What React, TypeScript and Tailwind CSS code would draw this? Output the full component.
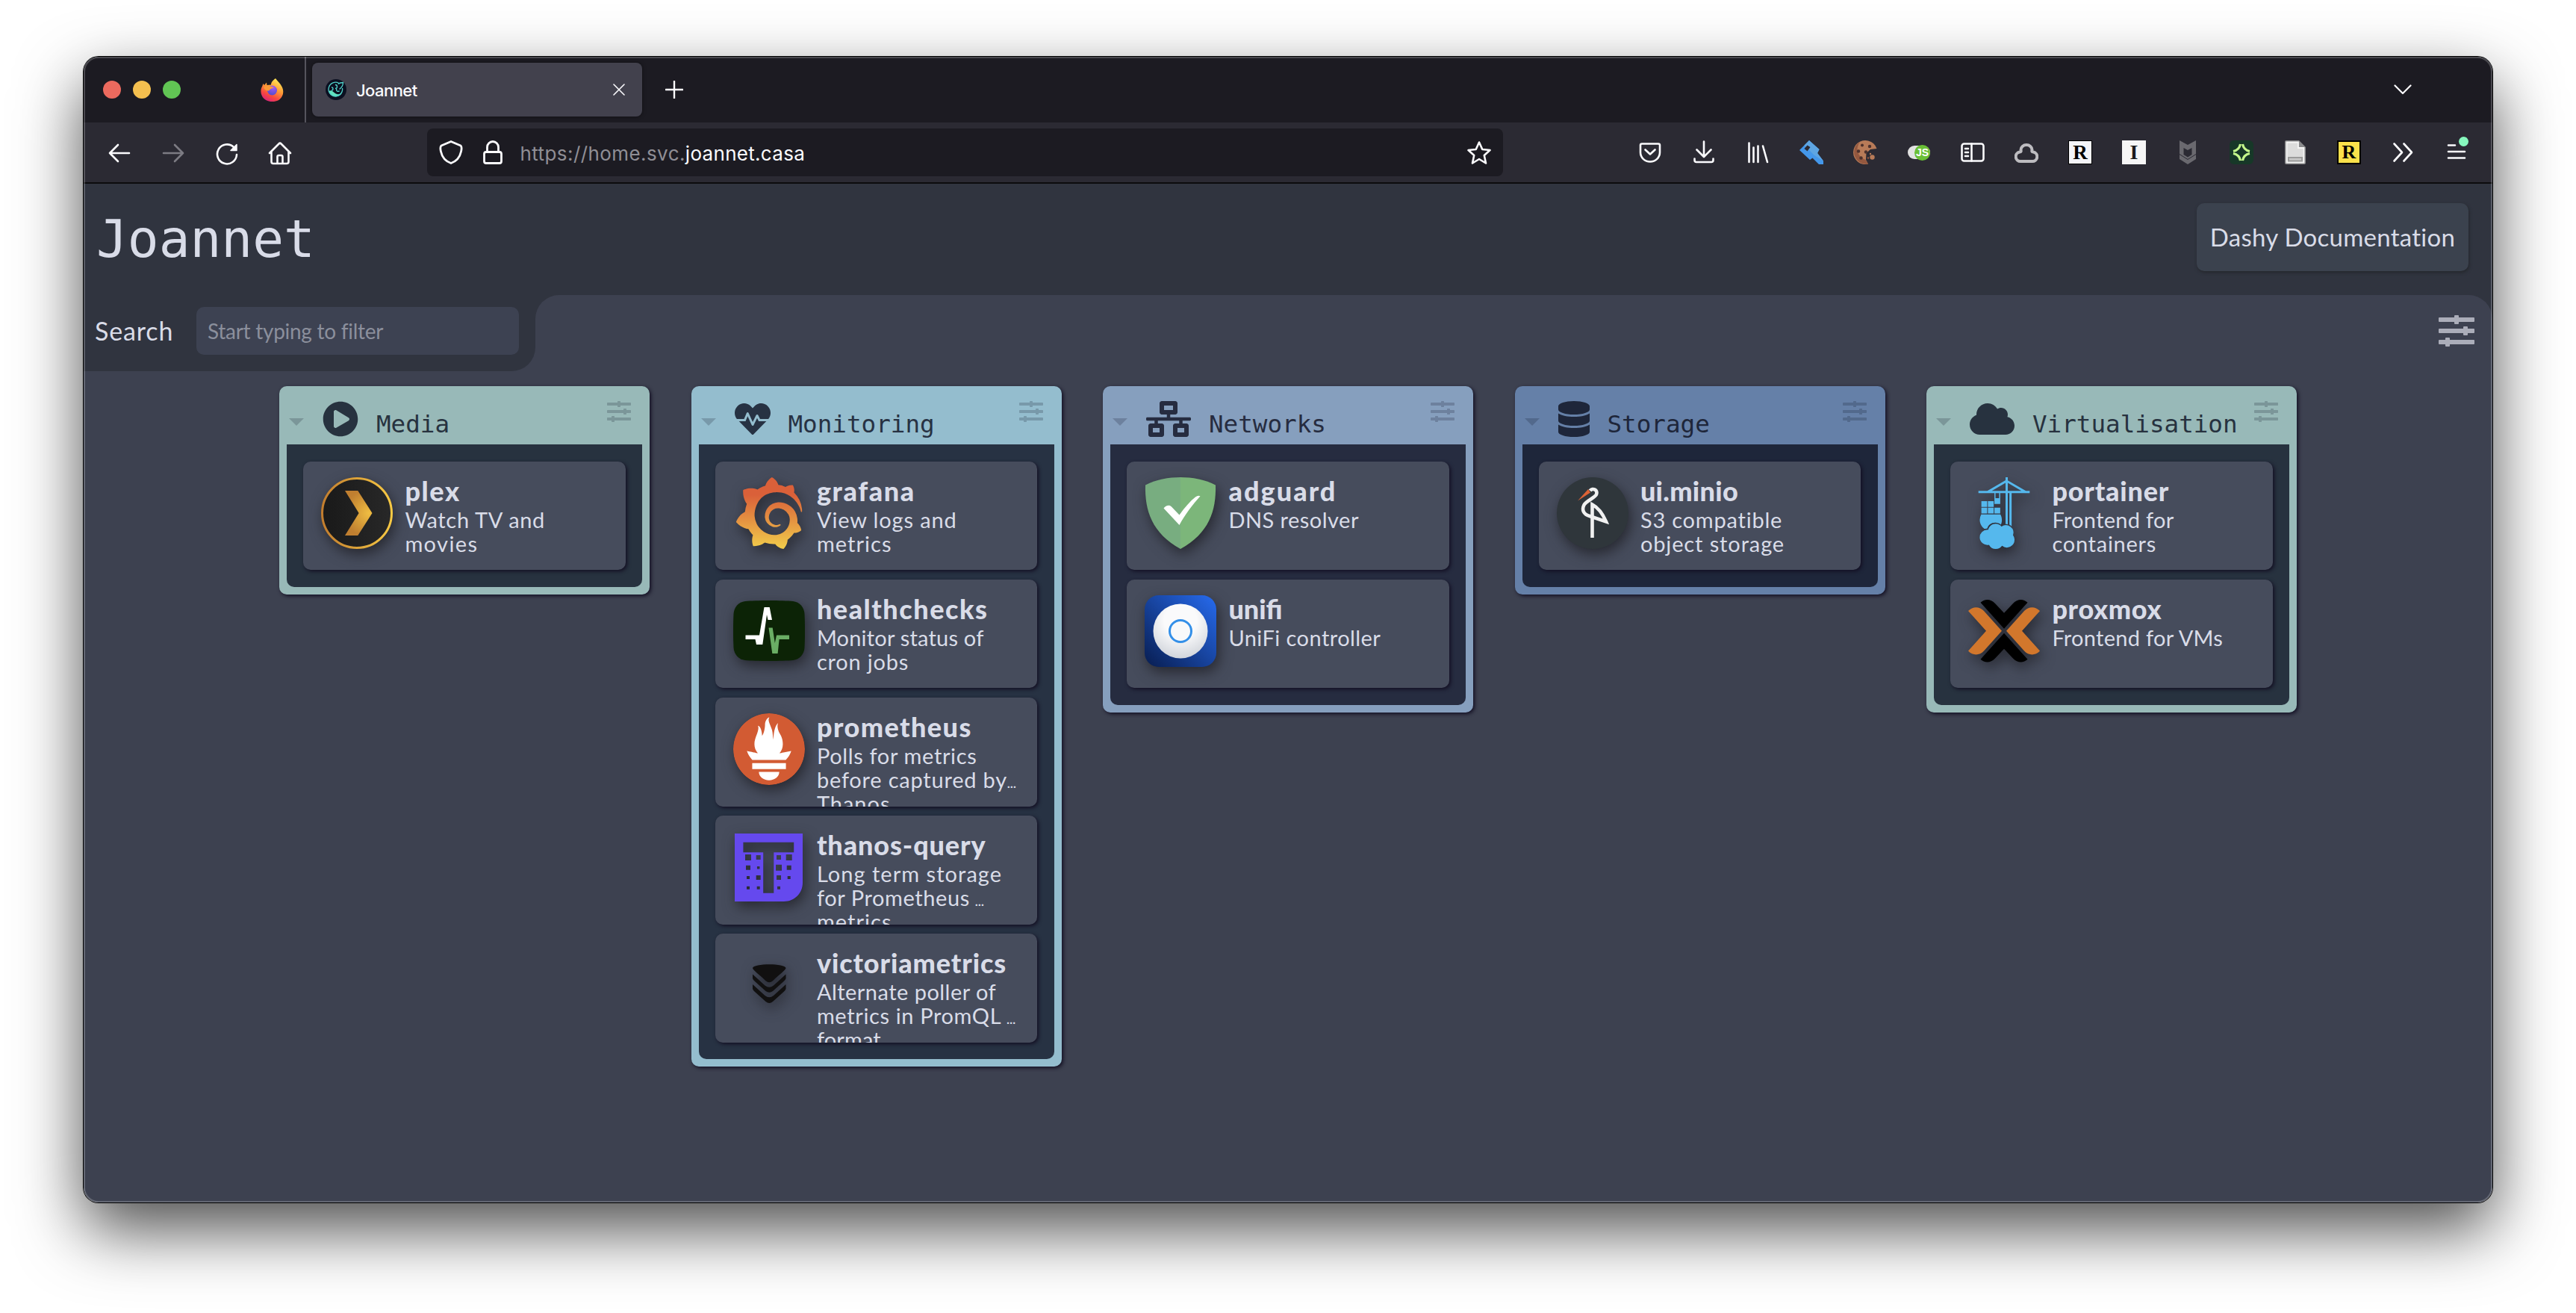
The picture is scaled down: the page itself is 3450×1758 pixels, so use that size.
import React from "react";
import { FaPlayCircle, FaHeartbeat, FaNetworkWired, FaDatabase, FaCloud } from "react-icons/fa";
import { SiGrafana, SiPrometheus, SiPortainer } from "react-icons/si";

/* ---------- service logos (96px box) ---------- */

const Plex = () => (
  <svg viewBox="0 0 96 96" className="size-24">
    <defs>
      <linearGradient id="plexRing" x1="0" x2="1"><stop offset="0" stopColor="#c27d2e" /><stop offset="1" stopColor="#f7c944" /></linearGradient>
      <linearGradient id="plexBg" x1="0" x2="1"><stop offset="0" stopColor="#191919" /><stop offset="1" stopColor="#282828" /></linearGradient>
      <radialGradient id="plexArrow" gradientUnits="userSpaceOnUse" cx="64" cy="48" r="32"><stop offset="0" stopColor="#efbd42" /><stop offset="1" stopColor="#c07f30" /></radialGradient>
    </defs>
    <circle cx="48" cy="48" r="46.5" fill="url(#plexBg)" stroke="url(#plexRing)" strokeWidth="3" />
    <path d="M32 18H49.300L68.500 48L49.300 78H32L50.600 48Z" fill="url(#plexArrow)" />
  </svg>
);

const Grafana = () => (
  <>
    <svg className="absolute size-0" aria-hidden="true">
      <defs><linearGradient id="grafanaFill" x1="0" x2="0" y1="0" y2="1"><stop offset="0.25" stopColor="#da6039" /><stop offset="1" stopColor="#f1cd4b" /></linearGradient></defs>
    </svg>
    <SiGrafana className="size-24" fill="url(#grafanaFill)" />
  </>
);

const Healthchecks = () => (
  <svg viewBox="0 0 96 81" className="w-24 h-[81px]">
    <path d="M16 1C30 -0.300 66 -0.300 80 1C89 2 95 9 95.500 18C96.200 33 96.200 48 95.500 63C95 72 89 79 80 80C66 81.300 30 81.300 16 80C7 79 1 72 0.500 63C-0.200 48 -0.200 33 0.500 18C1 9 7 2 16 1Z" fill="#0c2306" />
    <path d="M16.500 46.500H35L41.500 9H48.700L52 26H46.500L45 19L39.300 59H31L29.500 52H16.500Z" fill="#fff" />
    <path d="M47.500 36.500H52.700L55.800 57L58 46.500H75V52H61.600L59.600 71H52.300Z" fill="#6aad64" />
  </svg>
);

const Prometheus = () => (
  <SiPrometheus className="size-24 rounded-full bg-[radial-gradient(circle_closest-side,#fff_92%,transparent_93%)]" color="#d25b33" />
);

const thanosCells = [
  [18, 32, 8], [31.7, 32, 6], [59, 32, 6], [72.7, 32, 8],
  [18, 45.7, 6], [31.7, 45.7, 3.5], [59, 45.7, 8], [72.7, 45.7, 6],
  [18, 59, 4], [31.7, 59, 6], [59, 59, 6], [72.7, 59, 4],
  [18, 72.7, 4], [31.7, 72.7, 4], [59, 72.7, 4],
];
const thanosHoles = thanosCells.map(([x, y, s]) => `M${x - s / 2} ${y - s / 2}h${s}v${s}h${-s}z`).join("");
const Thanos = () => (
  <svg viewBox="0 0 91 91" className="size-[91px]">
    <path fillRule="evenodd" fill="#6549ee" d={`M0 0H91V66C91 80 80 91 66 91H0ZM11.400 11.700V25.300H38.200V79.700H52.300V25.300H79.200V11.700Z${thanosHoles}`} />
  </svg>
);

const Victoria = () => (
  <svg viewBox="0 0 96 96" className="size-24" fill="#111010">
    <path d="M26 25C27 18.500 69.500 18.500 70.500 25C70.500 28 61 34 53 42.300Q48.300 46 43.500 42.300C35.500 34 26 28 26 25Z" />
    <path d="M26 33.500L42.500 48.500Q48.300 53 54 48.500L70.500 33.500V39Q70 41 67.500 43L53 56Q48.300 59.500 43.500 56L29 43Q26.500 41 26 39Z" />
    <path d="M26 47L42.500 62Q48.300 66.500 54 62L70.500 47V53Q70 55 67.500 57L53 70Q48.300 74 43.500 70L29 57Q26.500 55 26 53Z" />
  </svg>
);

const Adguard = () => (
  <svg viewBox="0 0 96 96" className="size-24">
    <path d="M48 0C63 0 82 3 95 10.500C96 45 86 75 48 96Z" fill="#7cb67a" />
    <path d="M48 0C33 0 14 3 1 10.500C0 45 10 75 48 96Z" fill="#78ad80" />
    <path d="M25.500 41.500C28 38 33 36 36 39.500L46.500 50.500C54 40 61 32 68 26.500Q71.500 24 74.500 25.300C64 37 54 50 46.500 64Z" fill="#fff" />
  </svg>
);

const Unifi = () => (
  <svg viewBox="0 0 96 96" className="size-24">
    <defs>
      <linearGradient id="unifiBg" x1="0" y1="1" x2="1" y2="0"><stop offset="0" stopColor="#081d50" /><stop offset="1" stopColor="#276bee" /></linearGradient>
      <radialGradient id="unifiDisc" cx="0.5" cy="0.3" r="0.75"><stop offset="0.4" stopColor="#fafafb" /><stop offset="1" stopColor="#cdd1d8" /></radialGradient>
    </defs>
    <rect width="96" height="96" rx="19" fill="url(#unifiBg)" />
    <circle cx="48" cy="48" r="36.500" fill="url(#unifiDisc)" />
    <circle cx="48" cy="48" r="14.500" fill="#f8f9fa" stroke="#338fe8" strokeWidth="3" />
  </svg>
);

const Minio = () => (
  <svg viewBox="0 0 96 96" className="size-24">
    <circle cx="48" cy="48" r="48" fill="#2f363b" />
    <path d="M44.500 18C48 13.500 55.500 17 53 23C51 27.500 39 32 36.500 37C33 44 36 49.500 44 52L66 59.500C62 50 56 41 47.500 36.500V81" fill="none" stroke="#f1f1f1" strokeWidth="4.600" />
    <path d="M28 31.500L42 16L45 20.500Z" fill="#dd6336" />
  </svg>
);

const Portainer = () => <SiPortainer className="size-24" color="#55b8ed" />;

const Proxmox = () => (
  <svg viewBox="0 0 96 96" className="size-24">
    <g fill="#d2772c">
      <path d="M0 21C6 14.500 15 14.500 21 21L45 47.700L21 74.500C15 81 6 81 0 74.500L24 47.700Z" />
      <path d="M96 21C90 14.500 81 14.500 75 21L51 47.700L75 74.500C81 81 90 81 96 74.500L72 47.700Z" />
    </g>
    <path d="M16.500 9.700C22 4.500 30 4.500 36 11L48 23.700L60 11C66 4.500 74 4.500 79.500 9.700L48 44.700Z" />
    <path d="M16.500 85.700C22 90.900 30 90.900 36 84.400L48 71.700L60 84.400C66 90.900 74 90.900 79.500 85.700L48 50.700Z" />
  </svg>
);

/* ---------- dashboard data ---------- */

type Line = { text: string; track: string; more?: string };
type Item = { name: string; track: string; logo: () => React.ReactElement; lines: Line[] };
type Section = { title: string; icon: React.ReactElement; frame: string; ink: string; body: string; items: Item[] };

const teal = { frame: "bg-[#98b9b8]", ink: "text-[#27323f]", body: "bg-[#27323f]" };

const sections: Section[] = [
  {
    title: "Media", icon: <FaPlayCircle className="size-12" />, ...teal,
    items: [
      { name: "plex", track: "tracking-[1.63px]", logo: Plex, lines: [{ text: "Watch TV and", track: "tracking-[0.68px]" }, { text: "movies", track: "tracking-[1.38px]" }] },
    ],
  },
  {
    title: "Monitoring", icon: <FaHeartbeat className="size-12" />, frame: "bg-[#94bdce]", ink: "text-[#273243]", body: "bg-[#273243]",
    items: [
      { name: "grafana", track: "tracking-[1.59px]", logo: Grafana, lines: [{ text: "View logs and", track: "tracking-[0.87px]" }, { text: "metrics", track: "tracking-[1.03px]" }] },
      { name: "healthchecks", track: "tracking-[1.52px]", logo: Healthchecks, lines: [{ text: "Monitor status of", track: "tracking-[0.2px]" }, { text: "cron jobs", track: "tracking-[0.8px]" }] },
      { name: "prometheus", track: "tracking-[1.43px]", logo: Prometheus, lines: [{ text: "Polls for metrics", track: "tracking-[0.64px]" }, { text: "before captured by", track: "tracking-[0.79px]", more: "ml-0" }, { text: "Thanos", track: "tracking-[0.98px]" }] },
      { name: "thanos-query", track: "tracking-[0.89px]", logo: Thanos, lines: [{ text: "Long term storage", track: "tracking-[1.03px]" }, { text: "for Prometheus", track: "tracking-[0.59px]", more: "ml-[7px]" }, { text: "metrics", track: "tracking-[1.03px]" }] },
      { name: "victoriametrics", track: "tracking-[0.89px]", logo: Victoria, lines: [{ text: "Alternate poller of", track: "tracking-[0.47px]" }, { text: "metrics in PromQL", track: "tracking-[0.63px]", more: "ml-[7px]" }, { text: "format", track: "tracking-[0.13px]" }] },
    ],
  },
  {
    title: "Networks", icon: <FaNetworkWired className="h-12 w-[60px]" />, frame: "bg-[#869fbe]", ink: "text-[#262c40]", body: "bg-[#262c40]",
    items: [
      { name: "adguard", track: "tracking-[2.06px]", logo: Adguard, lines: [{ text: "DNS resolver", track: "tracking-[0.47px]" }] },
      { name: "unifi", track: "tracking-normal", logo: Unifi, lines: [{ text: "UniFi controller", track: "tracking-[0.44px]" }] },
    ],
  },
  {
    title: "Storage", icon: <FaDatabase className="h-12 w-[42px]" />, frame: "bg-[#6580a8]", ink: "text-[#1e263a]", body: "bg-[#1e263a]",
    items: [
      { name: "ui.minio", track: "tracking-[0.31px]", logo: Minio, lines: [{ text: "S3 compatible", track: "tracking-[0.78px]" }, { text: "object storage", track: "tracking-[0.88px]" }] },
    ],
  },
  {
    title: "Virtualisation", icon: <FaCloud className="h-12 w-[60px]" />, ...teal,
    items: [
      { name: "portainer", track: "tracking-[0.79px]", logo: Portainer, lines: [{ text: "Frontend for", track: "tracking-[0.3px]" }, { text: "containers", track: "tracking-[0.74px]" }] },
      { name: "proxmox", track: "tracking-[0.65px]", logo: Proxmox, lines: [{ text: "Frontend for VMs", track: "tracking-[0.29px]" }] },
    ],
  },
];

const Sliders = ({ className }: { className: string }) => (
  <svg viewBox="0 0 48 42" className={className} fill="currentColor">
    <rect y="3" width="48" height="6" rx="1" /><rect x="21" width="6" height="12" rx="1" />
    <rect y="18" width="48" height="6" rx="1" /><rect x="33" y="15" width="6" height="12" rx="1" />
    <rect y="33" width="48" height="6" rx="1" /><rect x="9" y="30" width="6" height="12" rx="1" />
  </svg>
);

function ItemCard({ item }: { item: Item }) {
  const Logo = item.logo;
  return (
    <a className="flex h-[145.6px] overflow-hidden rounded-[10px] bg-[#464c5c] pl-6 text-[#d9dce8] shadow-[2px_2px_5px_#130f23]">
      <div className="mt-[21px] flex size-24 shrink-0 items-center justify-center drop-shadow-[3px_7px_9px_rgba(28,28,34,0.75)]">
        <Logo />
      </div>
      <div className="ml-4 pt-[18px] font-['Lato',sans-serif] whitespace-nowrap">
        <div className={`text-[36px] leading-[42px] font-black ${item.track}`}>{item.name}</div>
        <div className="mt-[2px] text-[29px] leading-8">
          {item.lines.map((l) => (
            <div key={l.text} className="flex items-baseline">
              <span className={l.track}>{l.text}</span>
              {l.more && <span className={`text-[15px] leading-none font-black ${l.more}`}>…</span>}
            </div>
          ))}
        </div>
      </div>
    </a>
  );
}

function SectionCard({ section }: { section: Section }) {
  return (
    <section className={`w-[496px] shrink-0 rounded-[10px] px-2.5 pb-2.5 shadow-[2px_2px_5px_#130f23] ${section.frame}`}>
      <header className={`flex h-[78px] items-start ${section.ink}`}>
        <svg viewBox="0 0 20 10" className="mt-[43px] ml-[3px] h-2.5 w-5 opacity-25" fill="currentColor"><path d="M0 0H20L10 10Z" /></svg>
        <div className="mt-5 ml-[25px]">{section.icon}</div>
        <h2 className="mt-[30.500px] ml-[24px] font-['DejaVu_Sans_Mono',monospace] text-[32.6px] leading-10">{section.title}</h2>
        <Sliders className="mt-5 mr-[15px] ml-auto h-7 w-8 shrink-0 opacity-25" />
      </header>
      <div className={`flex flex-col gap-[12.6px] rounded-b-[10px] px-[22.4px] pt-[22.6px] pb-[22.4px] ${section.body}`}>
        {section.items.map((i) => <ItemCard key={i.name} item={i} />)}
      </div>
    </section>
  );
}

/* ---------- browser chrome ---------- */

const Stroke = ({ className, children, w = 2.6 }: { className: string; children: React.ReactNode; w?: number }) => (
  <svg viewBox="0 0 32 32" className={className} fill="none" stroke="currentColor" strokeWidth={w} strokeLinecap="round" strokeLinejoin="round">{children}</svg>
);

const Slot = ({ children }: { children: React.ReactNode }) => <div className="flex w-[72px] items-center justify-center">{children}</div>;

function TabStrip() {
  return (
    <div className="flex h-[88px] items-center bg-[#1c1b22]">
      <div className="flex gap-4 pl-[26px]">
        <span className="size-6 rounded-full bg-[#ec6a5e]" />
        <span className="size-6 rounded-full bg-[#f4bf4f]" />
        <span className="size-6 rounded-full bg-[#61c554]" />
      </div>
      <svg viewBox="0 0 31 31" className="ml-[107px] size-[31px]">
        <defs>
          <linearGradient id="foxBody" x1="0.8" y1="0" x2="0.3" y2="1"><stop offset="0" stopColor="#fff25a" /><stop offset="0.45" stopColor="#ff9a35" /><stop offset="0.75" stopColor="#f8483f" /><stop offset="1" stopColor="#d8227c" /></linearGradient>
          <radialGradient id="foxGlobe" cx="0.6" cy="0.2" r="0.9"><stop offset="0" stopColor="#a35af5" /><stop offset="1" stopColor="#4b4bc8" /></radialGradient>
        </defs>
        <path d="M20 0C23 4 26 6 28.500 11C32 18 30 24 25.500 28C20 32.500 10 32 5 27.500C-0.500 22.500 -0.500 15 2 11L3.500 7L5 9L8 5.500L8.500 9L14 8.500C14 5 17 2 20 0Z" fill="url(#foxBody)" />
        <circle cx="15.500" cy="16" r="6.500" fill="url(#foxGlobe)" />
        <path d="M4 12C8 8.500 14 10 18 12.500C15 13 13 14 11 16.500C8 17 5 15 4 12Z" fill="#fb9a37" />
      </svg>
      <span className="ml-[28px] h-full w-0.5 bg-[#55545d]" />
      <div className="ml-2 flex h-[72px] w-[442px] items-center rounded-lg bg-[#42414d] pr-[23px] pl-[18px] text-[#fbfbfe] shadow-[0_0_5px_rgba(0,0,0,0.5)]">
        <svg viewBox="0 0 28 28" className="size-7">
          <circle cx="14" cy="14" r="14" fill="#0b1021" />
          <path d="M4.500 16C8 14 10 17 13 19C17 21.500 20 20 22.500 17A9.300 9.300 0 0 1 4.500 16Z" fill="#62e3c0" />
          <path d="M18 5.500A9.300 9.300 0 1 0 22.500 12M17 6.500C19 4.500 21 4.500 23.500 4.500C23.500 8 22 11 18.500 13.500M13 7.500A2.500 2.500 0 1 1 13 12.500M8 11A2 2 0 1 1 8 15M15 13A2 2 0 1 0 18.500 15.500" fill="none" stroke="#4fd0c8" strokeWidth="1.300" />
        </svg>
        <span className="mt-[3px] ml-[13px] font-['Inter',sans-serif] text-[22px] font-medium tracking-[-0.55px]">Joannet</span>
        <Stroke className="ml-auto size-4" w={3.2}><path d="M2 2L30 30M30 2L2 30" /></Stroke>
      </div>
      <Stroke className="ml-[31px] size-6 text-[#fbfbfe]" w={3.2}><path d="M16 1V31M1 16H31" /></Stroke>
      <svg viewBox="0 0 24 14" className="mr-[108px] ml-auto h-3.500 w-6" fill="none" stroke="#fbfbfe" strokeWidth="2.200" strokeLinecap="round" strokeLinejoin="round"><path d="M1.500 1.500L12 12L22.500 1.500" /></svg>
    </div>
  );
}

function ToolBar() {
  return (
    <div className="flex h-[82px] items-center border-b-2 border-[#0c0c0d] bg-[#2b2a33] px-3 text-[#fbfbfe]">
      <Slot><Stroke className="mt-0.5 size-8"><path d="M29 16H3M14 5L3 16L14 27" /></Stroke></Slot>
      <Slot><Stroke className="mt-0.5 size-8 text-[#7c7b83]"><path d="M3 16H29M18 5L29 16L18 27" /></Stroke></Slot>
      <Slot>
        <Stroke className="mt-1 size-8"><path d="M29 17A13 13 0 1 1 25 7" /><path d="M29 3.500V11.500H21Z" fill="currentColor" strokeWidth="1.500" /></Stroke>
      </Slot>
      <Slot><Stroke className="mt-0.5 mr-0.5 size-8"><path d="M2 16L14.500 3.500Q16 2 17.500 3.500L30 16M4.500 14V27.500Q4.500 30 7 30H25Q27.500 30 27.500 27.500V14M12.500 30V21Q12.500 19 14.500 19H17.500Q19.500 19 19.500 21V30" /></Stroke></Slot>

      <div className="ml-[160px] flex h-16 w-[1441px] items-center rounded-lg bg-[#1c1b22] pr-4 pl-4">
        <Stroke className="size-8" w={2.8}><path d="M16 1.500L29 7Q31 9 29.500 15C28 22 23 28 16 30.500C9 28 4 22 2.500 15Q1 9 3 7Z" /></Stroke>
        <Stroke className="ml-6 size-8" w={2.8}><rect x="4.500" y="15.500" width="23" height="15" rx="2.500" /><path d="M8.500 15.500V9A7.500 7.500 0 0 1 23.500 9V15.500" /></Stroke>
        <div className="mt-[3px] ml-[20.500px] flex font-['Inter',sans-serif] text-[26px] leading-8 whitespace-nowrap">
          <span className="tracking-[0.42px] text-[#8f8e95]">https://home.svc.</span>
          <span className="tracking-[0.3px]">joannet.casa</span>
        </div>
        <Stroke className="mt-0.5 ml-auto size-8" w={2.6}><path d="M16 1.500L20.300 11L30.500 12L22.800 19L25 29.500L16 24L7 29.500L9.200 19L1.500 12L11.700 11Z" /></Stroke>
      </div>

      <div className="ml-auto flex">
        <Slot><Stroke className="size-8"><path d="M5 4.500H27Q29 4.500 29 6.500V16A13 12.500 0 0 1 3 16V6.500Q3 4.500 5 4.500ZM9.500 12.500L16 18.500L22.500 12.500" /></Stroke></Slot>
        <Slot><Stroke className="mr-px size-8"><path d="M16 1.500V21M6.500 12.500L16 22L25.500 12.500M3.500 24.500V26.500Q3.500 29 6 29H26Q28.500 29 28.500 26.500V24.500" /></Stroke></Slot>
        <Slot><Stroke className="size-8"><path d="M4.500 3.500V29M10.500 9.500V29M16.500 7.500V29M23 7.500L29 29" /></Stroke></Slot>
        <Slot>
          <svg viewBox="0 0 32 32" className="size-8">
            <path d="M13 0L26.500 12L24 17L32 27.500V32H26L17.500 23.500L14 26L0 13Z" fill="#4497ea" />
            <path d="M13 0L26.500 12L24 17L32 27.500L20 20L6.500 6.500Z" fill="#5ea5e2" />
            <path d="M10.500 6.500L14.500 9L10.500 14.500L6.500 11Z" fill="#2b2a33" />
          </svg>
        </Slot>
        <Slot>
          <svg viewBox="0 0 32 32" className="size-8">
            <path d="M20 0.500A16 16 0 1 0 20 31.500L17 26L17.500 17L23 12L31.500 11A16 16 0 0 0 20 0.500Z" fill="#b87b58" />
            <path d="M9 2A16 16 0 0 0 20 31.500L16.500 26A15 15 0 0 1 9 2Z" fill="#94583f" />
            <g fill="#4c312d"><circle cx="12" cy="6.500" r="2" /><circle cx="22" cy="8" r="2.200" /><circle cx="7" cy="14.500" r="2.200" /><circle cx="17" cy="15.500" r="2.200" /><circle cx="10.500" cy="23.500" r="2.200" /></g>
            <circle cx="25.500" cy="22.500" r="3.200" fill="#b87b58" /><circle cx="23" cy="18" r="1.200" fill="#b87b58" /><circle cx="20" cy="23.500" r="1.200" fill="#94583f" />
          </svg>
        </Slot>
        <Slot>
          <div className="flex h-[18px] w-[30px] items-center justify-end rounded-full bg-[#e2e2e2]">
            <span className="flex size-[21px] shrink-0 items-center justify-center rounded-full bg-[#6abf36] font-['Liberation_Sans',sans-serif] text-[14px] leading-none font-bold text-white">JS</span>
          </div>
        </Slot>
        <Slot><Stroke className="size-8"><rect x="1.500" y="4.500" width="29" height="23" rx="3" /><path d="M14.500 4.500V27.500M6 11H10M6 16H10M6 21H10" /></Stroke></Slot>
        <Slot><Stroke className="size-8 text-[#bdbcc0]" w={4}><path d="M8.500 28A6.300 6.300 0 0 1 7 15.500C9.500 15.500 8.500 13.500 8.500 12.500A7.500 6.500 0 0 1 23.500 12.500C23.500 13.500 22.500 15.500 25 15.500A6.300 6.300 0 0 1 23.500 28Z" /></Stroke></Slot>
        <Slot><span className="flex size-8 items-center justify-center border border-black bg-[#f4f4f8] font-['Liberation_Serif',serif] text-[27px] leading-none font-bold text-black">R</span></Slot>
        <Slot><span className="flex size-8 items-center justify-center bg-[#f6f6f6] font-['Liberation_Serif',serif] text-[28px] leading-none font-bold text-[#1a1a1a]">I</span></Slot>
        <Slot>
          <svg viewBox="0 0 22 32" className="h-8 w-[22px]">
            <path d="M0 0L11 6L22 0V25L11 32L0 25ZM5.500 10V19L11 22.500L16.500 19V10L11 13Z" fill="#6a696f" fillRule="evenodd" />
            <path d="M0 18.500L11 25.500L22 18.500" fill="none" stroke="#2b2a33" strokeWidth="1" />
          </svg>
        </Slot>
        <Slot>
          <svg viewBox="0 0 32 32" className="size-8">
            <rect width="32" height="32" rx="6" fill="#173828" />
            <path d="M14.500 5Q13 13 5 14.500M17.500 5Q19 13 27 14.500M14.500 27Q13 19 5 17.500M17.500 27Q19 19 27 17.500" fill="none" stroke="#c3f78a" strokeWidth="3.200" />
          </svg>
        </Slot>
        <Slot>
          <svg viewBox="0 0 28 32" className="h-8 w-7">
            <path d="M2 0H19L28 9V30Q28 32 26 32H2Q0 32 0 30V2Q0 0 2 0Z" fill="#8a8a8c" />
            <path d="M2.500 2.500H18V10H25.500V29.500H2.500Z" fill="#dcdcdc" stroke="#f5f5f5" strokeWidth="1.800" />
            <path d="M4 22H24V28.500H4Z" fill="#9b9b9b" /><path d="M6 24H22V26.500H6Z" fill="#c9c9c9" />
          </svg>
        </Slot>
        <Slot><span className="flex size-8 items-center justify-center border-2 border-black bg-[#fbe14b] font-['Liberation_Serif',serif] text-[26px] leading-none font-bold text-black">R</span></Slot>
        <Slot><Stroke className="size-8"><path d="M4.500 4.500L15 16L4.500 27.500M17.500 4.500L28 16L17.500 27.500" /></Stroke></Slot>
        <Slot>
          <div className="relative">
            <Stroke className="size-8"><path d="M5 6.500H14M5 15H27M5 23.500H27" /></Stroke>
            <span className="absolute -top-[5px] left-[19px] size-[13px] rounded-full bg-[#86f7bd]" />
          </div>
        </Slot>
      </div>
    </div>
  );
}

/* ---------- page ---------- */

export default function App() {
  return (
    <div className="h-[1758px] w-[3450px] overflow-hidden bg-white px-[112px] pt-[76px]">
      <div className="relative h-[1534px] w-[3226px] rounded-[20px] shadow-[0_0_0_1px_#000,0_36px_88px_rgba(0,0,0,0.7)]">
        <div className="flex h-full flex-col overflow-hidden rounded-[20px] bg-[#3d4150]">
          <TabStrip />
          <ToolBar />

          <header className="flex h-[149px] items-start justify-between bg-[#30343f] pt-[26px] pr-8 pl-[17px]">
            <h1 className="mt-[7px] font-['DejaVu_Sans_Mono',monospace] text-[69.5px] leading-[82px] text-[#d9dce8]">Joannet</h1>
            <a className="flex h-[91px] w-[364px] items-center justify-center rounded-[10px] bg-[#3b424e] font-['Lato',sans-serif] text-[33px] tracking-[0.26px] whitespace-nowrap text-[#d9dce8] shadow-[1px_2px_4px_#24272c]">Dashy Documentation</a>
          </header>

          <div className="flex h-[102px] shrink-0">
            <div className="bg-[#3d4150]">
              <form className="flex h-full w-[605px] items-start rounded-br-[32px] bg-[#30343f] pt-4 pl-[15px] font-['Lato',sans-serif]">
                <label className="mt-[10px] w-[136px] text-[34px] leading-[44px] tracking-[0.86px] text-[#d9dce8]">Search</label>
                <div className="flex h-16 w-[432px] items-center rounded-[10px] bg-[#3d4252] pl-[15px] text-[28px] tracking-[-0.28px] text-[#8b8f9c]">Start typing to filter</div>
              </form>
            </div>
            <div className="flex-1 bg-[#30343f]">
              <div className="flex h-full justify-end rounded-t-[32px] bg-[#3d4150] pt-[27px] pr-6">
                <Sliders className="h-[42px] w-12 text-[#abadb9]" />
              </div>
            </div>
          </div>

          <main className="flex items-start gap-[55.5px] pt-5 pl-[262px]">
            {sections.map((s) => <SectionCard key={s.title} section={s} />)}
          </main>
        </div>
        <div className="pointer-events-none absolute inset-0 rounded-[20px] border-2 border-white/20" />
      </div>
    </div>
  );
}
